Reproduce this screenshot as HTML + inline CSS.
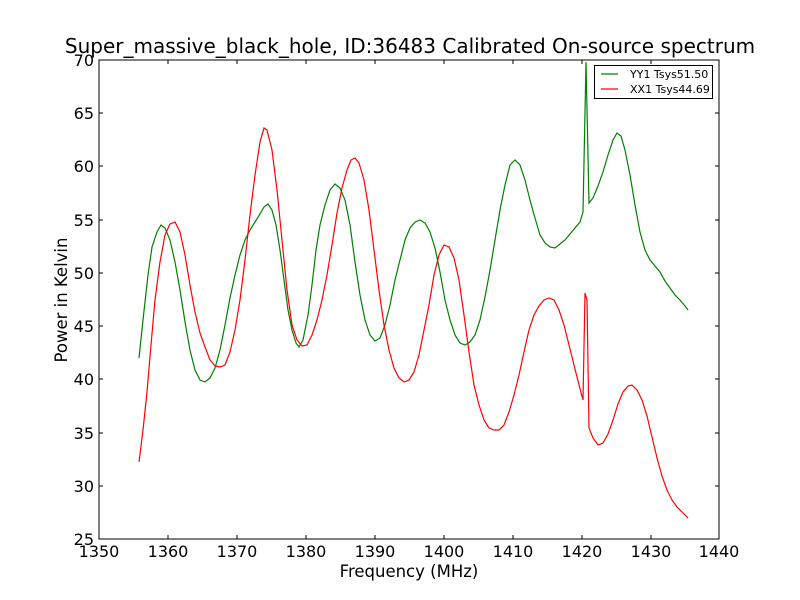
<!DOCTYPE html>
<html><head><meta charset="utf-8"><style>body{margin:0;background:#fff}svg{display:block}text{font-family:"DejaVu Sans","Liberation Sans",sans-serif;fill:#000}</style></head><body>
<svg width="800" height="600" viewBox="0 0 800 600" xmlns="http://www.w3.org/2000/svg">
<rect width="800" height="600" fill="#fff"/>
<text x="410" y="53" font-size="20" text-anchor="middle">Super_massive_black_hole, ID:36483 Calibrated On-source spectrum</text>
<polyline fill="none" stroke="#008000" stroke-width="1.2" points="139,358 143,320 148,275 152,247 157,232 161,225 165,228 170,240 175,262 180,290 185,322 190,350 195,370 200,380 205,382 210,378 215,368 220,350 225,325 230,298 235,275 240,255 245,240 250,230 255,222 260,214 264,207 268,204 272,210 276,225 280,250 284,280 288,310 292,330 296,343 299,347 303,340 308,315 312,285 316,250 320,225 325,205 330,190 335,184 340,188 345,200 350,225 355,262 360,295 365,320 370,335 375,341 380,338 385,325 390,305 395,280 400,260 405,240 410,228 415,222 420,220 425,223 430,232 435,248 440,272 445,300 450,320 455,335 460,343 465,345 470,342 475,335 480,320 485,297 490,270 495,240 500,210 505,185 510,165 515,160 520,165 525,180 530,200 535,218 540,235 545,243 550,247 555,248 560,244 565,240 570,234 575,228 580,222 583,212 586,62 589,203 593,198 598,186 603,172 608,155 613,140 617,133 621,136 625,150 630,175 635,205 640,232 645,250 650,260 655,266 660,272 665,281 670,288 675,295 680,300 685,306 688,310"/>
<polyline fill="none" stroke="#ff0000" stroke-width="1.2" points="139,462 143,430 147,392 151,345 155,300 160,262 165,235 170,224 175,222 180,232 185,255 190,285 195,312 200,333 205,347 210,360 215,366 220,367 225,365 230,352 235,330 240,300 245,260 250,215 255,175 260,142 264,128 267,130 272,150 277,190 282,240 287,290 292,325 297,340 302,346 307,345 312,335 317,320 322,300 327,275 332,245 337,213 342,188 347,170 351,160 355,158 359,163 364,180 369,210 374,250 379,290 384,325 389,350 394,368 399,378 404,382 409,380 414,372 419,355 424,330 429,305 434,275 439,255 444,245 449,247 454,258 459,280 464,315 469,352 474,385 479,405 484,420 489,428 494,430 499,430 504,425 509,412 514,395 519,375 524,352 529,330 534,315 539,306 544,300 549,298 554,300 559,310 564,325 569,345 574,365 579,385 583,400 585,293 587,300 589,428 593,438 598,445 603,443 608,434 613,420 618,404 623,392 628,386 632,385 637,390 642,400 647,416 652,437 657,458 662,476 667,490 672,500 677,507 682,512 688,518"/>
<rect x="99" y="60" width="620" height="479" fill="none" stroke="#000" stroke-width="1"/>
<g stroke="#000" stroke-width="1">
<path d="M168,539v-4M237,539v-4M306,539v-4M375,539v-4M444,539v-4M513,539v-4M582,539v-4M651,539v-4M168,60v4M237,60v4M306,60v4M375,60v4M444,60v4M513,60v4M582,60v4M651,60v4"/>
<path d="M99,486h4M99,433h4M99,379h4M99,326h4M99,273h4M99,220h4M99,166h4M99,113h4M719,486h-4M719,433h-4M719,379h-4M719,326h-4M719,273h-4M719,220h-4M719,166h-4M719,113h-4"/>
</g>
<g font-size="16" text-anchor="middle">
<text x="99" y="557">1350</text><text x="168" y="557">1360</text><text x="237" y="557">1370</text><text x="306" y="557">1380</text><text x="375" y="557">1390</text><text x="444" y="557">1400</text><text x="513" y="557">1410</text><text x="582" y="557">1420</text><text x="651" y="557">1430</text><text x="719" y="557">1440</text>
</g>
<g font-size="16" text-anchor="end">
<text x="94" y="545">25</text><text x="94" y="492">30</text><text x="94" y="439">35</text><text x="94" y="385">40</text><text x="94" y="332">45</text><text x="94" y="279">50</text><text x="94" y="226">55</text><text x="94" y="172">60</text><text x="94" y="119">65</text><text x="94" y="66">70</text>
</g>
<text x="409" y="577" font-size="16.5" text-anchor="middle">Frequency (MHz)</text>
<text transform="translate(67,300) rotate(-90)" font-size="16.5" text-anchor="middle">Power in Kelvin</text>
<rect x="594.5" y="65.5" width="118" height="33" fill="#fff" stroke="#000" stroke-width="1"/>
<line x1="601" y1="74" x2="618" y2="74" stroke="#008000" stroke-width="1.2"/>
<line x1="601" y1="89" x2="618" y2="89" stroke="#ff0000" stroke-width="1.2"/>
<text x="630" y="78" font-size="11">YY1 Tsys51.50</text>
<text x="630" y="93" font-size="11">XX1 Tsys44.69</text>
</svg>
</body></html>
